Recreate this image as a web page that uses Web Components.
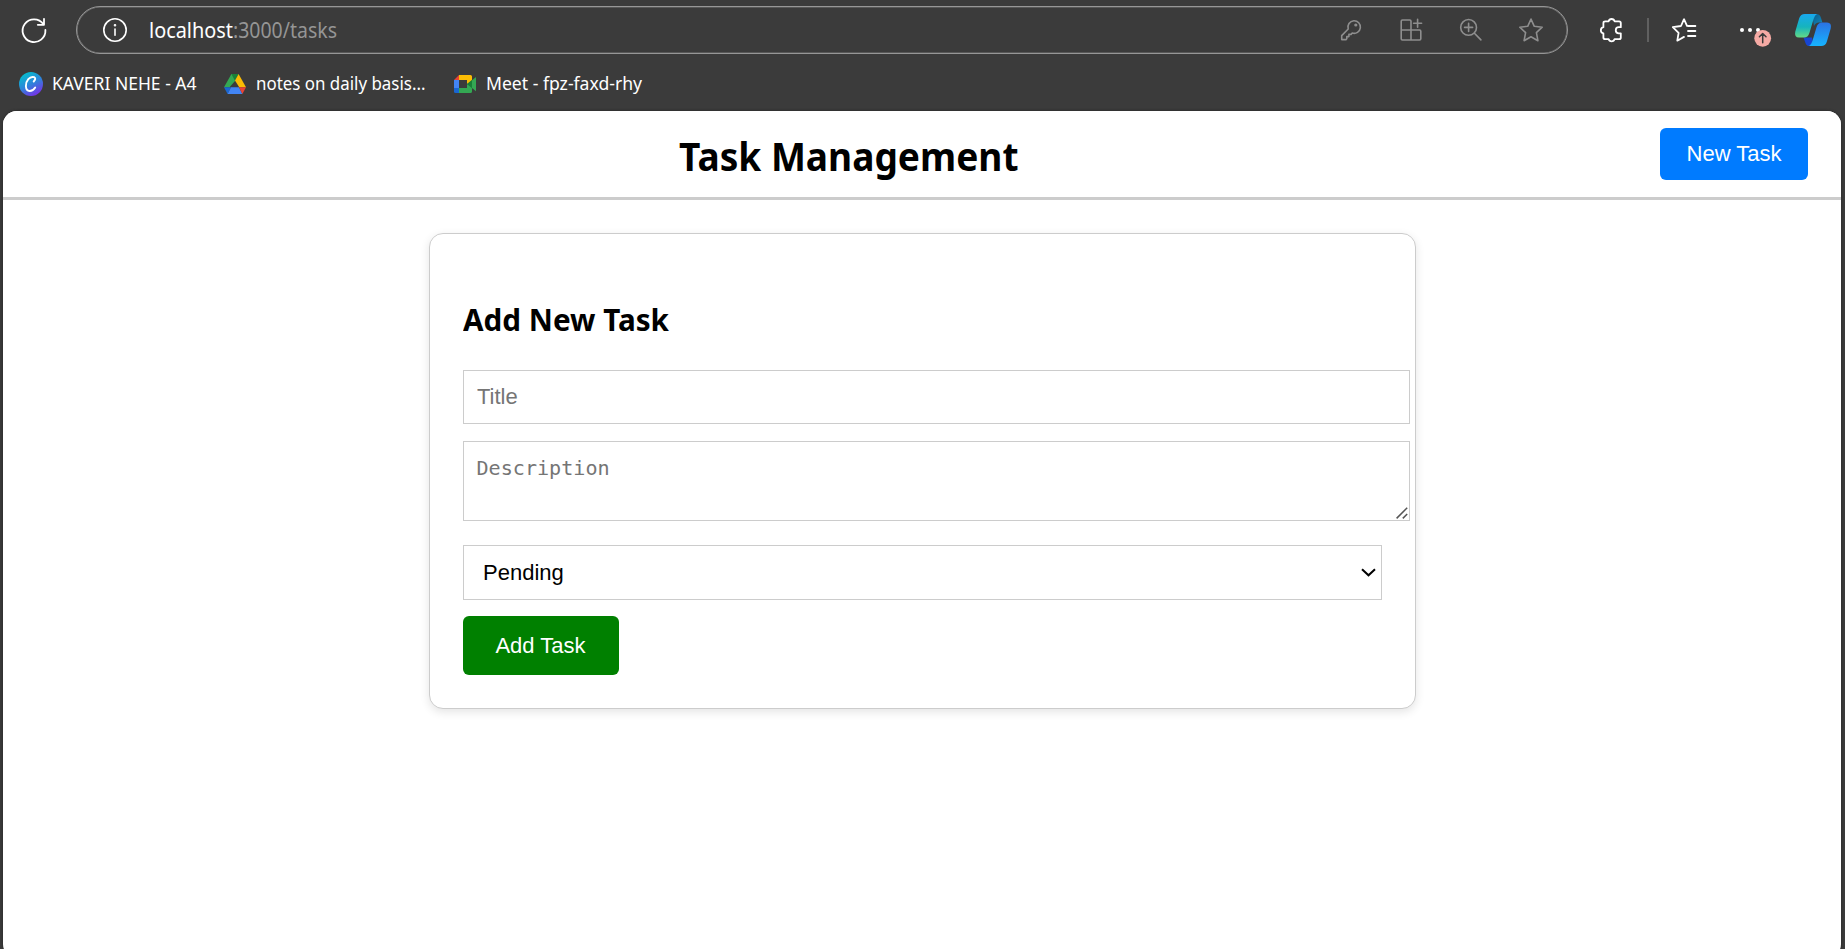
<!DOCTYPE html>
<html lang="en">
<head>
<meta charset="utf-8">
<title>Task Management</title>
<style>
html,body{margin:0;height:100%;overflow:hidden;background:#3b3b3b}
</style>
</head>
<body>
<browser-window>
  <tool-bar slot="toolbar"></tool-bar>
  <bookmark-bar slot="bookmarks"></bookmark-bar>
  <task-header><fit-text run="339.5">Task Management</fit-text></task-header>
  <task-form></task-form>
</browser-window>
<script>
const define = (name, html, after) => customElements.define(name, class extends HTMLElement {
  connectedCallback() {
    if (this.shadowRoot) return;
    const t = document.createElement('template');
    t.innerHTML = html;
    this.attachShadow({mode: 'open'}).append(t.content.cloneNode(true));
    if (after) after(this);
  }
});

/* One line of text condensed or widened to a given run length. */
define('fit-text', `<style>:host{display:inline-block;white-space:pre;flex:none}span{display:inline-block;transform-origin:0 50%}</style><span><slot></slot></span>`, el => {
  const fit = () => {
    const s = el.shadowRoot.querySelector('span'), run = +el.getAttribute('run');
    s.style.transform = 'none';
    el.style.width = 'auto';
    const w = s.getBoundingClientRect().width;
    if (w) s.style.transform = 'scaleX(' + run / w + ')';
    el.style.width = run + 'px';
  };
  fit();
  addEventListener('load', fit);
});

define('browser-window', `<style>
:host{display:flex;flex-direction:column;width:1845px;height:960px;background:#3b3b3b}
main{margin:0 4px 0 3px;height:847px;background:#fff;border-radius:14px;box-shadow:0 0 3px #222;overflow:hidden;flex:none}
</style><slot name="toolbar"></slot><slot name="bookmarks"></slot><main><slot></slot></main>`);

define('tool-bar', `<style>
:host{display:flex;align-items:center;height:60px;flex:none;font:21.3px "Noto Sans","Open Sans",sans-serif;color:#fff}
svg{display:block;flex:none;fill:none;stroke:#fff;stroke-width:1.8;stroke-linejoin:round;stroke-linecap:round;overflow:visible}
.reload{margin:0 30px 0 22px}
.pill{box-sizing:border-box;width:1492px;height:48px;border:1px solid #969696;box-shadow:inset 0 0 0 .6px #777;border-radius:24px;display:flex;align-items:center;padding:0 24px 0 26px;flex:none}
.pill svg{stroke:#8e8e8e;stroke-width:1.6}
.pill .info{stroke:#fff;margin-right:22px}
.url{display:flex;flex:1;line-height:28px}
.dim{color:#959595}
.tools{display:flex;gap:36px;align-items:center}
.ext{margin-left:31px}
.bar{width:1.6px;height:24px;background:#606060;margin:0 23px 0 24px}
.more{margin:0 0 0 43px}
.copilot{margin-left:22px}
.copilot *{stroke:none}
</style>
<svg class="reload" width="24" height="24"><path d="M23.4 12A11.4 11.4 0 1 1 21.4 6.2M22 .8V6.8H15.8"/></svg>
<div class="pill">
<svg class="info" width="24" height="24"><circle cx="12" cy="12" r="11.2"/><path d="M12 11v6.2"/><circle cx="12" cy="7.2" r=".5" fill="#fff"/></svg>
<div class="url"><fit-text run="84">localhost</fit-text><fit-text class="dim" run="104">:3000/tasks</fit-text></div>
<div class="tools">
<svg width="24" height="24"><path d="M14.8 2.8a6.3 6.3 0 1 1-1.6 12.3l-1.1 1.3H9.9v2.2H7.8v2.2L7 21.6H2.7V17.6l6.5-6.6a6.3 6.3 0 0 1 5.6-8.2Z"/><circle cx="16.8" cy="7" r=".8" fill="#8e8e8e"/></svg>
<svg width="24" height="24"><path d="M12 12H2.2V3.2Q2.2 2 3.4 2H10.8Q12 2 12 3.2V22H3.4Q2.2 22 2.2 20.8V12M12 12H20.6Q21.8 12 21.8 13.2V20.8Q21.8 22 20.6 22H12M18.6 1.3v8M14.6 5.3h8"/></svg>
<svg width="24" height="24"><circle cx="9.6" cy="9.4" r="7.9"/><path d="M15.4 15.2l6.5 6.7M9.6 5.4v8M5.6 9.4h8"/></svg>
<svg width="24" height="24"><path d="M12 1.1l3.3 7.2 7.9.9-5.8 5.5 1.5 8L12 18.8l-6.9 3.9 1.5-8L.8 9.2l7.9-.9Z"/></svg>
</div></div>
<svg class="ext" width="24" height="24"><path d="M6.2 3.3H9.6A3.1 3.1 0 0 1 15.6 3.3H20.1Q21.8 3.3 21.8 5V9.2H19.8A3 3 0 0 0 19.8 15.3H21.8V19.4Q21.8 21.1 20.1 21.1H15.6A3.1 3.1 0 0 1 9.6 21.1H6.2Q4.4 21.1 4.4 19.4V15.3A3.1 3.1 0 0 1 4.4 9.2V5Q4.4 3.3 6.2 3.3Z"/></svg>
<div class="bar"></div>
<svg width="24" height="24"><path d="M15 7.8L12 1.2 9 8 .8 9.2 6.6 14.8 5.3 22.7 12 18.9M16 8h7.4M16 13h7.4M16 18h7.4"/></svg>
<svg class="more" width="34" height="24"><g fill="#fff" stroke="none"><circle cx="3" cy="12" r="2"/><circle cx="11" cy="12" r="2"/><circle cx="19" cy="12" r="2"/></g><circle cx="23.7" cy="20.3" r="8.4" fill="#f5aaa4" stroke="none"/><path d="M23.7 24.8v-9M20.4 18.8l3.3-3.3 3.3 3.3" stroke="#3b3b3b" stroke-width="1.5"/></svg>
<svg class="copilot" width="36" height="32" viewBox="0 0 36 32"><defs>
<linearGradient id="a" x1="0" y1="0" x2="0" y2="1"><stop stop-color="#18a8ee"/><stop offset=".55" stop-color="#16b4bd"/><stop offset="1" stop-color="#65da85"/></linearGradient>
<linearGradient id="b" x1="0" y1="0" x2="0" y2="1"><stop stop-color="#2b72e3"/><stop offset="1" stop-color="#16b4ff"/></linearGradient>
<linearGradient id="c" x1="0" y1="0" x2="1" y2="1"><stop stop-color="#075b89"/><stop offset="1" stop-color="#1689bd"/></linearGradient></defs>
<path fill="url(#c)" d="M17 0H21.5Q25 0 26 4L27.4 8.5H24Q20.5 8.5 19 12Z"/>
<path fill="#1745d2" d="M8.5 23.5H17L19 32H14.5Q11.3 32 10.3 28.4Z"/>
<path fill="url(#a)" d="M9.8 0H22Q19.8 1 18.6 5L14.4 19Q13 23.5 9 23.5H4Q-1 23.5 .3 17.5L4.2 4.3Q5.6 0 9.8 0Z"/>
<path fill="url(#b)" d="M26.2 32H14Q16.2 31 17.4 27L21.6 13Q23 8.5 27 8.5H32Q37 8.5 35.7 14.5L31.8 27.7Q30.4 32 26.2 32Z"/></svg>`);

define('bookmark-bar', `<style>
:host{display:flex;box-sizing:border-box;height:51px;padding:0 0 3px 19px;align-items:center;flex:none;font:17.8px/24px "Noto Sans","Open Sans",sans-serif;color:#fff}
svg{display:block;flex:none}
fit-text{margin-top:-2px}
.a{margin-right:9px}.b{margin:0 10px 0 27px}.c{margin:0 10px 0 29px}
</style>
<svg class="a" width="24" height="24"><defs><linearGradient id="g" x1=".2" y1="0" x2=".75" y2="1"><stop stop-color="#00c4cc"/><stop offset=".5" stop-color="#2d85da"/><stop offset="1" stop-color="#7d2ae8"/></linearGradient></defs><circle cx="12" cy="12" r="12" fill="url(#g)"/><path d="M14.7 9.5Q17.6 6.5 15.1 5.2C10.8 3.7 6.7 9.1 6.9 14.2C7.3 20.6 13.2 20.2 16.2 15.5" fill="none" stroke="#fff" stroke-width="1.9" stroke-linecap="round"/></svg>
<fit-text run="144.5">KAVERI NEHE - A4</fit-text>
<svg class="b" width="22" height="20" viewBox="0 0 22 20"><path fill="#34a853" d="M7.4 0H11V7L5.5 13.2H0Z"/><path fill="#188038" d="M7.4 0H14.6L11 6.8Z"/><path fill="#fbbc04" d="M14.6 0L22 13.2H15.2L11 6.4Z"/><path fill="#1967d2" d="M0 13.2H7L3.6 20Z"/><path fill="#4285f4" d="M7 13.2H15L18.4 20H3.6Z"/><path fill="#ea4335" d="M15 13.2H22L18.4 20Z"/></svg>
<fit-text run="169.5">notes on daily basis...</fit-text>
<svg class="c" width="22" height="18" viewBox="0 0 22 18"><path fill="#4285f4" d="M0 5H5V13H0Z"/><path fill="#ea4335" d="M0 5L5 0V5Z"/><path fill="#fbbc04" d="M5 0H16.5Q18 0 18 1.5V6L13 9V5H5Z"/><path fill="#34a853" d="M5 13H13V9L18 12V16.5Q18 18 16.5 18H5Z"/><path fill="#1967d2" d="M0 13H5V18H1.5Q0 18 0 16.5Z"/><path fill="#34a853" d="M18 5.3L22 2V16.2L18 13Z"/><path fill="#188038" d="M13 9L18 4.8V13.2Z"/></svg>
<fit-text run="156">Meet - fpz-faxd-rhy</fit-text>`);

define('task-header', `<style>
:host{display:flex;box-sizing:border-box;height:89px;border-bottom:3px solid #ccc;justify-content:space-between;align-items:flex-start;padding:17px 33px 0 676px;background:#fff}
h1{margin:1px 0 0;font:bold 40px/54px "Noto Sans","Open Sans",sans-serif;color:#000}
button{width:148px;height:52px;padding:0 0 1px;border:0;border-radius:6px;background:#007bff;color:#fff;font:22px "Liberation Sans",Arial,sans-serif}
</style><h1><slot></slot></h1><button>New Task</button>`);

define('task-form', `<style>
:host{display:block;box-sizing:border-box;width:987px;height:476px;margin:33px 0 0 426px;border:1px solid #ccc;border-radius:14px;box-shadow:0 3px 10px rgba(0,0,0,.11);padding:65px 33px 0;background:#fff}
h2{margin:0 0 31px;height:40px;font:bold 31px/40px "Noto Sans","Open Sans",sans-serif;color:#000}
form{display:flex;flex-direction:column;align-items:flex-start}
input,textarea,select{box-sizing:border-box;border:1px solid #ccc;border-radius:0;margin:0;background:#fff;outline:0;color:#000;font:22px "Liberation Sans",Arial,sans-serif}
::placeholder{color:#757575;opacity:1}
input{width:947px;height:54px;padding:0 13px}
.area{display:grid;margin:17px 0 24px}
.area>*{grid-area:1/1}
textarea{display:block;width:947px;height:80px;padding:12px 12.5px;resize:none;font:20.1px/28px "DejaVu Sans Mono",monospace}
.grip{align-self:end;justify-self:end;margin:0 2px 2px 0;pointer-events:none}
.pick{display:grid;align-items:center;margin-bottom:16px}
.pick>*{grid-area:1/1}
select{appearance:none;width:919px;height:55px;padding:0 19px}
.pick svg{justify-self:end;margin:0 6px 0 0;pointer-events:none}
button{width:156px;height:59px;padding:0 1px 0 0;border:0;border-radius:6px;background:green;color:#fff;font:22px "Liberation Sans",Arial,sans-serif}
</style>
<h2><fit-text run="206">Add New Task</fit-text></h2>
<form>
<input placeholder="Title">
<div class="area"><textarea placeholder="Description"></textarea>
<svg class="grip" width="12" height="12" fill="none" stroke="#555" stroke-width="1.5"><path d="M.6 11.4L11.2.8M6.8 11.4l4.4-4.4"/></svg></div>
<div class="pick"><select><option>Pending</option></select>
<svg width="15" height="9" fill="none" stroke="#000" stroke-width="2"><path d="M1 1.2l6.5 6.1L14 1.2"/></svg></div>
<button type="button">Add Task</button>
</form>`);
</script>
</body>
</html>
